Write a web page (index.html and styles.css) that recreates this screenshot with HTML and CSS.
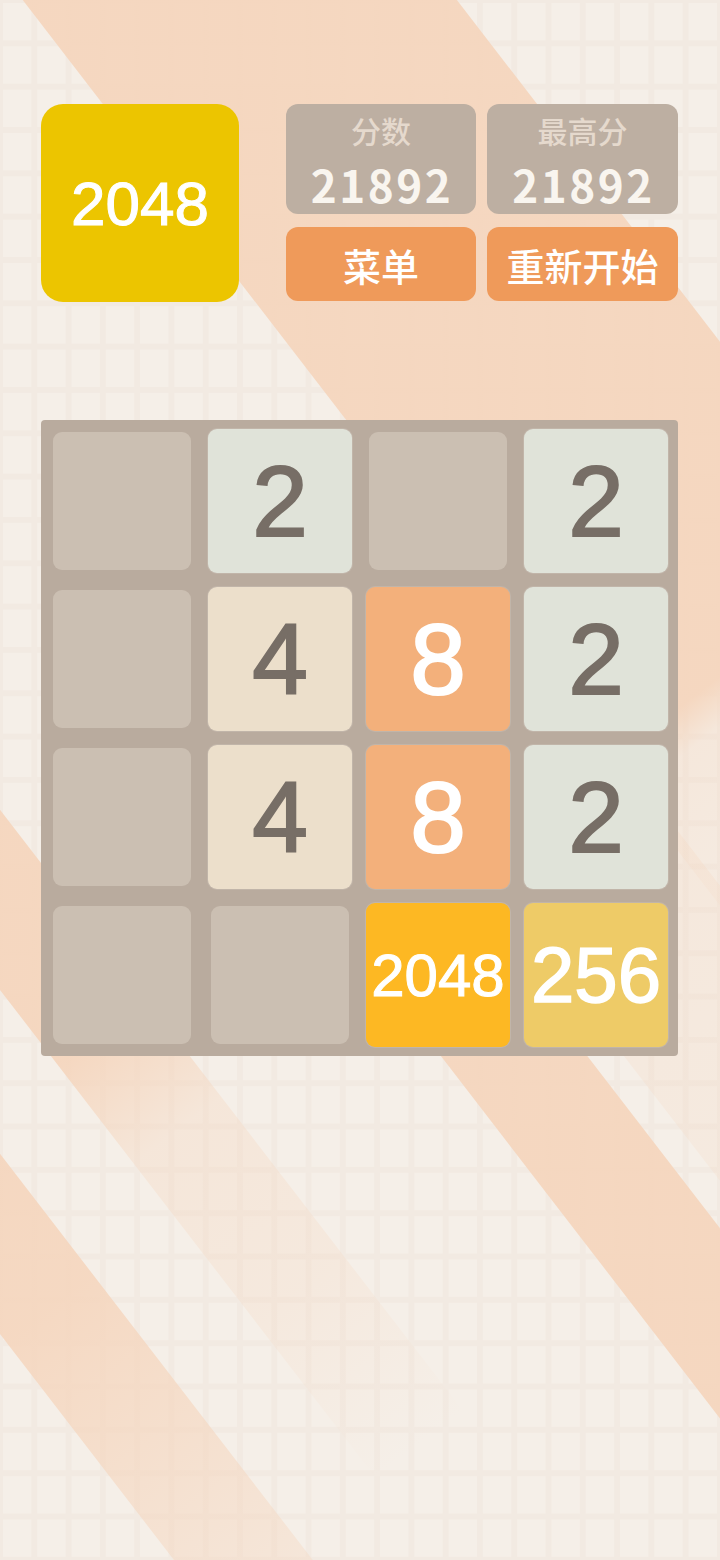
FILE: index.html
```html
<!DOCTYPE html>
<html lang="zh">
<head>
<meta charset="utf-8">
<title>2048</title>
<link rel="stylesheet" href="styles.css">
</head>
<body>
<div class="page">
  <svg class="bg" viewBox="0 0 720 1560" width="720" height="1560" aria-hidden="true">
    <defs>
      <linearGradient id="gA">
        <stop offset="0" stop-color="#f5d6be" stop-opacity="0.95"/>
        <stop offset="0.829" stop-color="#f5d6be" stop-opacity="0.95"/>
        <stop offset="0.85" stop-color="#f5d6be" stop-opacity="0.3"/>
        <stop offset="1" stop-color="#f5d6be" stop-opacity="0"/>
      </linearGradient>
      <linearGradient id="gC">
        <stop offset="0" stop-color="#f5d6be" stop-opacity="0.95"/>
        <stop offset="0.42" stop-color="#f5d6be" stop-opacity="0.95"/>
        <stop offset="0.56" stop-color="#f5d6be" stop-opacity="0.35"/>
        <stop offset="0.78" stop-color="#f5d6be" stop-opacity="0.25"/>
        <stop offset="1" stop-color="#f5d6be" stop-opacity="0"/>
      </linearGradient>
      <linearGradient id="gD">
        <stop offset="0" stop-color="#f5d6be" stop-opacity="0.95"/>
        <stop offset="0.38" stop-color="#f5d6be" stop-opacity="0.9"/>
        <stop offset="0.75" stop-color="#f5d6be" stop-opacity="0.5"/>
        <stop offset="1" stop-color="#f5d6be" stop-opacity="0.25"/>
      </linearGradient>
      <linearGradient id="gE">
        <stop offset="0" stop-color="#f5d6be" stop-opacity="0"/>
        <stop offset="0.15" stop-color="#f5d6be" stop-opacity="0.95"/>
        <stop offset="1" stop-color="#f5d6be" stop-opacity="0.95"/>
      </linearGradient>
      <linearGradient id="gF">
        <stop offset="0" stop-color="#f5d6be" stop-opacity="0"/>
        <stop offset="0.4" stop-color="#f5d6be" stop-opacity="0.3"/>
        <stop offset="1" stop-color="#f5d6be" stop-opacity="0.2"/>
      </linearGradient>
    </defs>
    <g transform="rotate(52.4)">
      <rect x="-600" y="-362" width="1900" height="344" fill="url(#gA)"/>
      <rect x="700" y="-30" width="700" height="180" fill="url(#gF)"/>
      <rect x="800" y="179" width="900" height="116" fill="url(#gE)"/>
      <rect x="500" y="494" width="900" height="110" fill="url(#gC)"/>
      <rect x="800" y="704" width="700" height="110" fill="url(#gD)"/>
    </g>
  </svg>

  <div class="content">
    <header class="header">
      <div class="logo">2048</div>
      <div class="panel">
        <div class="score-box">
          <div class="score-label">分数</div>
          <div class="score-value">21892</div>
        </div>
        <div class="score-box">
          <div class="score-label">最高分</div>
          <div class="score-value">21892</div>
        </div>
        <div class="btn">菜单</div>
        <div class="btn">重新开始</div>
      </div>
    </header>

    <main class="board">
      <div class="cell"></div>
      <div class="cell"><div class="tile t2">2</div></div>
      <div class="cell"></div>
      <div class="cell"><div class="tile t2">2</div></div>

      <div class="cell"></div>
      <div class="cell"><div class="tile t4">4</div></div>
      <div class="cell"><div class="tile t8">8</div></div>
      <div class="cell"><div class="tile t2">2</div></div>

      <div class="cell"></div>
      <div class="cell"><div class="tile t4">4</div></div>
      <div class="cell"><div class="tile t8">8</div></div>
      <div class="cell"><div class="tile t2">2</div></div>

      <div class="cell"></div>
      <div class="cell"></div>
      <div class="cell"><div class="tile t2048">2048</div></div>
      <div class="cell"><div class="tile t256">256</div></div>
    </main>
  </div>
</div>
</body>
</html>
```

FILE: styles.css
```css
* { box-sizing: border-box; }

html, body {
  margin: 0;
  padding: 0;
}

body {
  width: 720px;
  height: 1560px;
  overflow: hidden;
  font-family: "Liberation Sans", "Noto Sans CJK SC", sans-serif;
}

.page {
  position: relative;
  width: 720px;
  height: 1560px;
  overflow: hidden;
  background-color: #f5efe8;
  background-image:
    linear-gradient(to right, #f2eae2 0 2.5px, transparent 2.5px calc(100% - 2.5px), #f2eae2 calc(100% - 2.5px)),
    linear-gradient(to bottom, #f2eae2 0 2.5px, transparent 2.5px calc(100% - 2.5px), #f2eae2 calc(100% - 2.5px));
  background-size: 34.2857px 43.3333px;
}

.bg {
  position: absolute;
  left: 0;
  top: 0;
  z-index: 0;
}

.content {
  position: relative;
  z-index: 1;
  padding-top: 104px;
  padding-left: 41px;
}

.header {
  display: flex;
  gap: 47px;
}

.logo {
  width: 198px;
  height: 198px;
  border-radius: 22px;
  background: #ecc500;
  color: #ffffff;
  font-family: "Liberation Sans", sans-serif;
  font-size: 62px;
  -webkit-text-stroke: 1px #ffffff;
  display: flex;
  align-items: center;
  justify-content: center;
}

.panel {
  display: grid;
  grid-template-columns: 190px 191px;
  grid-template-rows: 110px 74px;
  column-gap: 11px;
  row-gap: 13px;
}

.score-box {
  background: #bdafa2;
  border-radius: 12px;
  display: flex;
  flex-direction: column;
  align-items: center;
  padding-top: 8px;
}

.score-label {
  font-family: "Noto Sans CJK SC", sans-serif;
  font-weight: 500;
  font-size: 30px;
  line-height: 36px;
  height: 36px;
  color: #e5d9cd;
}

.score-value {
  font-family: "Noto Sans CJK SC", sans-serif;
  font-weight: 700;
  font-size: 44px;
  line-height: 44px;
  height: 44px;
  margin-top: 14px;
  letter-spacing: 2.5px;
  padding-left: 2px;
  color: #f9f5ef;
}

.btn {
  background: #ef9a5a;
  border-radius: 12px;
  display: flex;
  align-items: center;
  justify-content: center;
  color: #ffffff;
  font-family: "Noto Sans CJK SC", sans-serif;
  font-weight: 500;
  font-size: 38px;
}

.board {
  margin-top: 118px;
  width: 637px;
  height: 636px;
  background: #b9ab9e;
  border-radius: 4px;
  padding: 12px 13px 12px 12px;
  display: grid;
  grid-template-columns: repeat(4, 138px);
  grid-template-rows: repeat(4, 138px);
  gap: 20px;
}

.cell {
  background: #cbbfb2;
  border-radius: 9px;
  display: flex;
}

.tile {
  flex: 1;
  margin: -3px;
  border-radius: 9px;
  display: flex;
  align-items: center;
  justify-content: center;
  font-family: "Liberation Sans", sans-serif;
  font-size: 100px;
  -webkit-text-stroke: 2px currentColor;
  box-shadow: 0 0 0 1px rgba(255, 255, 255, 0.12);
}

.t2 { background: #e0e3d9; color: #776e66; }
.t4 { background: #ecdfcb; color: #776e66; }
.t8 { background: #f3b07b; color: #ffffff; }
.t2048 { background: #fdb823; color: #ffffff; font-size: 60px; -webkit-text-stroke: 1px #ffffff; }
.t256 { background: #eecb67; color: #ffffff; font-size: 78px; -webkit-text-stroke: 1.5px #ffffff; }
```
